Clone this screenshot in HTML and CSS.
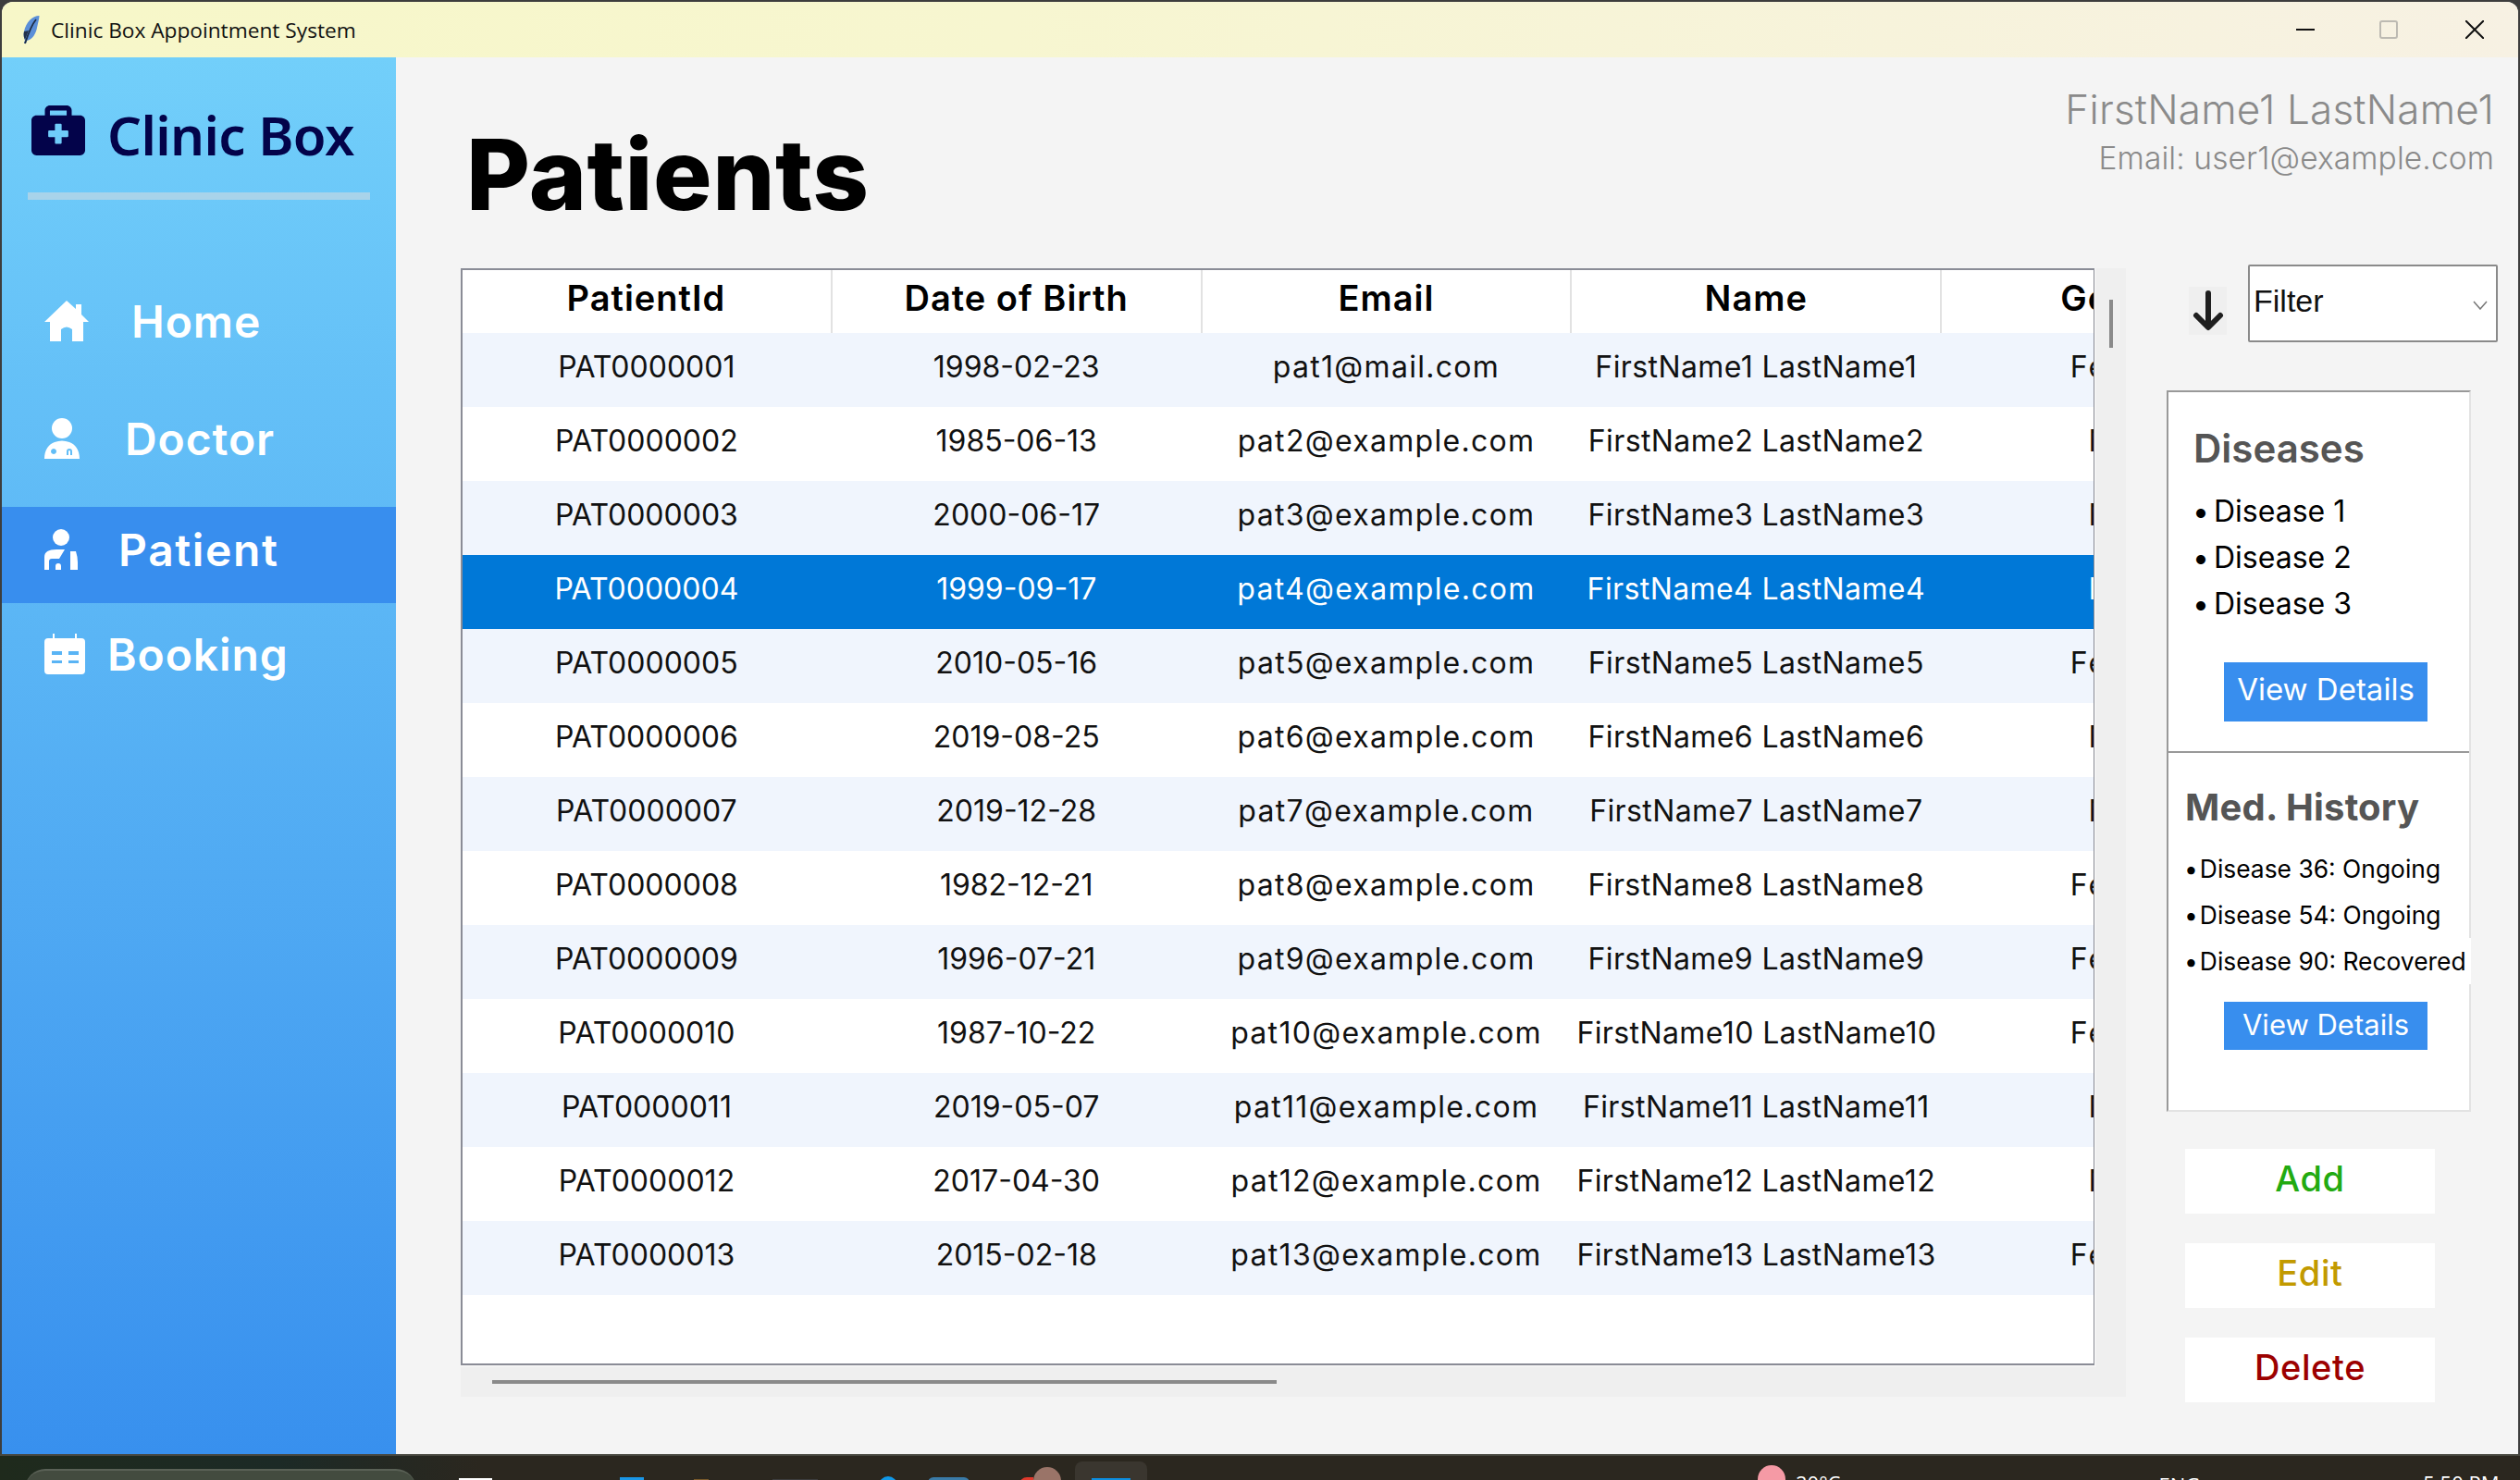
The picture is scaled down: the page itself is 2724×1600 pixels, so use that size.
FILE: index.html
```html
<!DOCTYPE html>
<html lang="en">
<head>
<meta charset="utf-8">
<title>Clinic Box Appointment System</title>
<link rel="stylesheet" href="styles.css">
</head>
<body>
<div class="window">
  <header class="titlebar">
    <svg class="feather" viewBox="0 0 18 32"><path d="M17.500 1C10 1 3 8 1 18c-1 4 0 7 1 9l-1 4h2l1-3c6-1 10-8 11-14 1-5 2.500-10 2.500-13z" fill="#5b8fd8"/><path d="M14 5C9 11 6 19 2 31" stroke="#1d2c44" stroke-width="1.800" fill="none"/><path d="M1 18c-1 4 0 7 1 9l4-10z" fill="#22324c"/></svg>
    <span class="title-text">Clinic Box Appointment System</span>
    <div class="win-controls">
      <svg class="win-min" viewBox="0 0 20 20"><path d="M0 10h20" stroke="#111" stroke-width="2"/></svg>
      <svg class="win-max" viewBox="0 0 20 20"><rect x="1" y="1" width="18" height="18" rx="2" fill="none" stroke="#bdbab2" stroke-width="2"/></svg>
      <svg class="win-close" viewBox="0 0 20 20"><path d="M0 0l20 20M20 0L0 20" stroke="#111" stroke-width="2"/></svg>
    </div>
  </header>
  <div class="app">
    <aside class="sidebar">
      <div class="brand">
        <svg class="brand-icon" viewBox="0 0 512 480" preserveAspectRatio="none"><path fill="#03034a" d="M464 96h-80V48c0-26.500-21.500-48-48-48H176c-26.500 0-48 21.500-48 48v48H48c-26.500 0-48 21.500-48 48v288c0 26.500 21.500 48 48 48h416c26.500 0 48-21.500 48-48V144c0-26.500-21.500-48-48-48zM176 48h160v48H176V48zm176 248c0 4.400-3.600 8-8 8h-56v56c0 4.400-3.600 8-8 8h-48c-4.400 0-8-3.600-8-8v-56h-56c-4.400 0-8-3.600-8-8v-48c0-4.400 3.600-8 8-8h56v-56c0-4.400 3.600-8 8-8h48c4.400 0 8 3.600 8 8v56h56c4.400 0 8 3.600 8 8v48z"/></svg>
        <span class="brand-name">Clinic Box</span>
      </div>
      <div class="brand-rule"></div>
      <nav class="nav">
        <a class="nav-item nav-home">
          <svg class="icon-home" viewBox="0 0 48 44"><path fill="#fff" d="M24 0l10 9V4h6v11l8 8h-6v21H30V31q-6-5-12 0v13H6V23H0z"/></svg>
          <span>Home</span>
        </a>
        <a class="nav-item nav-doctor">
          <svg class="icon-doctor" viewBox="0 0 38 44"><circle cx="19" cy="11" r="11" fill="#fff"/><path fill="#fff" fill-rule="evenodd" d="M11 26q8-3 16 0c6 2 11 8 11 18H0c0-10 5-16 11-18zM10 33a3 3 0 1 0 .01 0zM24 40v-4q0-3 3-3t3 3v4h-2v-4q0-1-1-1t-1 1v4z"/></svg>
          <span>Doctor</span>
        </a>
        <a class="nav-item nav-patient active">
          <svg class="icon-patient" viewBox="0 0 36 44"><circle cx="18" cy="9" r="9" fill="#fff"/><path fill="#fff" d="M13 22h9l-6 10H8a3 3 0 0 0-3 3v9H0V30q0-8 13-8zM28 24h6q2 6 2 12v8h-8zM12 40a3 3 0 0 1 6 0v4h-6z"/></svg>
          <span>Patient</span>
        </a>
        <a class="nav-item nav-booking">
          <svg class="icon-booking" viewBox="0 0 44 44"><path fill="#fff" fill-rule="evenodd" d="M9 0h2v5h22V0h2v5h5q4 0 4 4v31q0 4-4 4H4q-4 0-4-4V9q0-4 4-4h5zM8 19v4h11v-4zM26 19v4h11v-4zM8 29v3h11v-3zM26 29v3h11v-3z"/></svg>
          <span>Booking</span>
        </a>
      </nav>
    </aside>
    <main class="main">
      <div class="page-head">
        <h1 class="page-title">Patients</h1>
        <div class="user">
          <div class="user-name">FirstName1 LastName1</div>
          <div class="user-email">Email: user1@example.com</div>
        </div>
      </div>
      <div class="content">
        <section class="table-area">
          <div class="table-frame">
            <table class="grid">
              <colgroup><col class="col"><col class="col"><col class="col"><col class="col"><col class="col"></colgroup>
              <thead><tr><th>PatientId</th><th>Date of Birth</th><th>Email</th><th>Name</th><th>Gender</th></tr></thead>
              <tbody>
                <tr><td>PAT0000001</td><td>1998-02-23</td><td>pat1@mail.com</td><td>FirstName1 LastName1</td><td>Female</td></tr>
                <tr><td>PAT0000002</td><td>1985-06-13</td><td>pat2@example.com</td><td>FirstName2 LastName2</td><td>Male</td></tr>
                <tr><td>PAT0000003</td><td>2000-06-17</td><td>pat3@example.com</td><td>FirstName3 LastName3</td><td>Male</td></tr>
                <tr class="selected"><td>PAT0000004</td><td>1999-09-17</td><td>pat4@example.com</td><td>FirstName4 LastName4</td><td>Male</td></tr>
                <tr><td>PAT0000005</td><td>2010-05-16</td><td>pat5@example.com</td><td>FirstName5 LastName5</td><td>Female</td></tr>
                <tr><td>PAT0000006</td><td>2019-08-25</td><td>pat6@example.com</td><td>FirstName6 LastName6</td><td>Male</td></tr>
                <tr><td>PAT0000007</td><td>2019-12-28</td><td>pat7@example.com</td><td>FirstName7 LastName7</td><td>Male</td></tr>
                <tr><td>PAT0000008</td><td>1982-12-21</td><td>pat8@example.com</td><td>FirstName8 LastName8</td><td>Female</td></tr>
                <tr><td>PAT0000009</td><td>1996-07-21</td><td>pat9@example.com</td><td>FirstName9 LastName9</td><td>Female</td></tr>
                <tr><td>PAT0000010</td><td>1987-10-22</td><td>pat10@example.com</td><td>FirstName10 LastName10</td><td>Female</td></tr>
                <tr><td>PAT0000011</td><td>2019-05-07</td><td>pat11@example.com</td><td>FirstName11 LastName11</td><td>Male</td></tr>
                <tr><td>PAT0000012</td><td>2017-04-30</td><td>pat12@example.com</td><td>FirstName12 LastName12</td><td>Male</td></tr>
                <tr><td>PAT0000013</td><td>2015-02-18</td><td>pat13@example.com</td><td>FirstName13 LastName13</td><td>Female</td></tr>
              </tbody>
            </table>
          </div>
          <div class="vtrack"><div class="vthumb"></div></div>
          <div class="htrack"><div class="hthumb"></div></div>
        </section>
        <section class="side">
          <div class="toolbar">
            <div class="sort-btn"><svg viewBox="0 0 34 44"><path d="M17 3v36M4 27l13 13 13-13" fill="none" stroke="#1f1f1f" stroke-width="6" stroke-linecap="round" stroke-linejoin="round"/></svg></div>
            <div class="filter"><span>Filter</span><svg viewBox="0 0 16 10"><path d="M1 1l7 8 7-8" fill="none" stroke="#777" stroke-width="1.500"/></svg></div>
          </div>
          <div class="panel">
            <div class="panel-top">
              <h2 class="panel-heading">Diseases</h2>
              <ul class="items">
                <li>Disease 1</li><li>Disease 2</li><li>Disease 3</li>
              </ul>
              <button class="view-btn view-top">View Details</button>
            </div>
            <div class="panel-bottom">
              <h2 class="history-heading">Med. History</h2>
              <ul class="history">
                <li>Disease 36: Ongoing</li><li>Disease 54: Ongoing</li><li class="over">Disease 90: Recovered</li>
              </ul>
              <button class="view-btn view-bottom">View Details</button>
            </div>
          </div>
          <div class="actions">
            <button class="action add">Add</button>
            <button class="action edit">Edit</button>
            <button class="action del">Delete</button>
          </div>
        </section>
      </div>
    </main>
  </div>
</div>
<footer class="taskbar">
  <div class="search"></div>
  <i class="tb tb-white"></i><i class="tb tb-blue"></i><i class="tb tb-brown"></i><i class="tb tb-dark"></i><i class="tb tb-sky"></i><i class="tb tb-steel"></i><i class="tb tb-red"></i><i class="tb tb-oval"></i>
  <div class="tb-active"><i class="tb-active-in"></i></div>
  <i class="weather-dot"></i><span class="tb-text weather">20°C</span>
  <span class="tb-text lang">ENG</span>
  <span class="tb-text clock">5:50 PM</span>
</footer>
</body>
</html>
```
FILE: styles.css
```css
* { box-sizing: border-box; }
html, body { margin: 0; padding: 0; }
body { width: 2724px; height: 1600px; overflow: hidden; background: #3d3d3d; font-family: Inter, "Liberation Sans", sans-serif; color: #000; display: flex; flex-direction: column; }
.window { width: 2720px; height: 1570px; margin: 2px 2px 0; border-radius: 12px 12px 0 0; overflow: hidden; display: flex; flex-direction: column; background: #f4f4f4; }

.titlebar { flex: 0 0 60px; display: flex; align-items: center; background: linear-gradient(90deg, #f7f7c8 0%, #f7f6d0 40%, #f7f1e3 100%); padding-left: 23px; }
.feather { width: 18px; height: 32px; margin-right: 12px; }
.title-text { font-family: "Open Sans", sans-serif; font-size: 22.7px; color: #111; }
.win-controls { margin-left: auto; display: flex; align-items: center; padding-right: 37px; }
.win-min, .win-max, .win-close { width: 20px; height: 20px; display: block; }
.win-max { margin-left: 70px; }
.win-close { margin-left: 73px; }

.app { flex: 1; display: flex; min-height: 0; }
.sidebar { flex: 0 0 426px; background: linear-gradient(180deg, #72cffa 0%, #3890ee 100%); display: flex; flex-direction: column; }
.brand { display: flex; align-items: center; height: 146px; padding: 52px 0 40px 32px; }
.brand-icon { width: 58px; height: 54px; }
.brand-name { margin-left: 24px; padding-top: 9px; font-family: "Noto Sans", sans-serif; font-weight: 600; font-size: 58px; line-height: 54px; color: #03034a; letter-spacing: -0.6px; }
.brand-rule { height: 8px; margin-left: 28px; width: 370px; background: #a8d3ea; }
.nav { margin-top: 68px; display: flex; flex-direction: column; }
.nav-item { display: flex; align-items: center; padding-left: 46px; color: #fff; font-size: 48px; font-weight: 600; letter-spacing: 0.9px; }
.nav-home { height: 126px; }
.nav-doctor { height: 138px; padding-bottom: 10px; }
.nav-patient { height: 104px; padding-bottom: 12px; letter-spacing: 1.6px; }
.nav-booking { height: 108px; padding-top: 2px; }
.active { background: #388eee; }
.icon-home { width: 48px; height: 44px; margin-right: 46px; }
.icon-doctor { width: 38px; height: 44px; margin-right: 49px; }
.icon-patient { width: 36px; height: 44px; margin-right: 44px; }
.icon-booking { width: 44px; height: 44px; margin-right: 24px; }

.main { flex: 1; min-width: 0; display: flex; flex-direction: column; }
.page-head { height: 224px; display: flex; justify-content: space-between; padding: 0 26px 0 76px; }
.page-title { margin: 62px 0 0; font-size: 106px; line-height: 130px; font-weight: 800; letter-spacing: 0.5px; color: #000; }
.user { text-align: right; padding-top: 27px; color: #8a8a8a; }
.user-name { font-size: 44px; line-height: 58px; font-weight: 300; letter-spacing: 0.2px; }
.user-email { font-size: 33.5px; line-height: 44px; margin-top: 2px; font-weight: 300; letter-spacing: 0.1px; }
.content { flex: 1; display: flex; min-height: 0; }

.table-area { margin: 4px 0 0 70px; width: 1800px; height: 1220px; display: grid; grid-template-columns: 1768px 32px; grid-template-rows: 1188px 32px; }
.table-frame { width: 1766px; border: 2px solid #8a8c96; border-right-width: 1px; background: #fff; overflow: hidden; height: 1186px; }
.grid { border-collapse: collapse; table-layout: fixed; width: 2000px; margin-left: -1px; }
.grid th { height: 68px; font-size: 38px; font-weight: 600; padding: 0 0 8px; background: #fff; border-right: 2px solid #e2e2e2; letter-spacing: 1px; }
.grid td { height: 80px; padding: 0 6px 8px; font-size: 32px; text-align: center; white-space: nowrap; overflow: hidden; color: #111; font-weight: 400; }
.grid td:nth-child(3) { letter-spacing: 1.3px; }
.grid td:nth-child(4) { letter-spacing: 0.4px; }
.grid td:nth-child(5) { letter-spacing: 2px; }
.grid tbody tr:nth-child(odd) { background: #f0f5fd; }
.grid tbody tr.selected { background: #0078d7; }
.grid tbody tr.selected td { color: #fff; }
.vtrack { background: #efefef; padding: 34px 0 0 14px; grid-row: 1 / span 2; grid-column: 2; }
.vthumb { width: 4px; height: 52px; background: #8a8a8a; }
.htrack { background: #efefef; padding: 14px 0 0 34px; grid-column: 1; grid-row: 2; }
.hthumb { width: 848px; height: 4px; background: #8a8a8a; }

.side { flex: 1; min-width: 0; }
.toolbar { display: flex; padding-left: 68px; height: 84px; align-items: flex-start; }
.sort-btn { width: 41px; height: 52px; margin-top: 24px; background: #efefef; display: flex; align-items: center; justify-content: center; }
.sort-btn svg { width: 34px; height: 44px; }
.filter { width: 270px; height: 84px; margin-left: 23px; background: #fff; border: 2px solid #8a8a8a; border-radius: 2px; display: flex; align-items: center; justify-content: space-between; padding: 0 9px 6px 4px; font-family: "Liberation Sans", sans-serif; font-size: 34px; color: #111; }
.filter svg { width: 16px; height: 10px; margin-top: 10px; }
.panel { margin: 52px 0 0 44px; width: 329px; height: 780px; background: #fff; border: 2px solid #e3e3e3; border-top-color: #999; border-left-color: #999; }
.panel-top { height: 390px; border-bottom: 2px solid #999; padding-top: 33px; }
.panel-heading { margin: 0 0 0 27px; font-size: 42px; line-height: 56px; font-weight: 600; color: #555; }
.items { list-style: none; margin: 15px 0 0 26px; padding: 0; font-size: 32px; line-height: 50px; }
.items li::before { content: "•"; margin-right: 5px; }
.history li::before { content: "•"; margin-right: 2px; }
.view-btn { display: block; border: 0; background: #388eee; color: #fff; font-family: inherit; padding: 0; width: 220px; }
.view-top { height: 64px; margin: 38px 0 0 60px; font-size: 33px; padding-bottom: 6px; }
.panel-bottom { padding-top: 36px; }
.history-heading { margin: 0 0 0 18px; font-size: 40px; line-height: 46px; font-weight: 700; color: #555; letter-spacing: 0.2px; }
.history { list-style: none; margin: 18px 0 0 17px; padding: 0; font-size: 26.4px; line-height: 50px; white-space: nowrap; }
.history .over { background: #fff; margin-right: -2px; }
.view-bottom { height: 52px; margin: 19px 0 0 60px; font-size: 31px; padding-bottom: 4px; }
.actions { margin: 40px 0 0 64px; width: 270px; display: flex; flex-direction: column; gap: 32px; }
.action { height: 70px; border: 0; background: #fff; font-family: inherit; font-size: 38px; font-weight: 500; padding: 0 0 6px; letter-spacing: 0.6px; }
.add { color: #22aa11; }
.edit { color: #c29a00; }
.del { color: #9c0000; }

.taskbar { flex: 1; display: flex; align-items: flex-start; overflow: hidden; background: linear-gradient(90deg, #1f2a1c 0, #1c2a26 300px, #2b271f 520px, #2b271f 100%); border-top: 2px solid #46463e; }
.search { width: 423px; height: 40px; margin: 14px 0 0 27px; background: #434b3f; border-top: 2px solid #5a6156; border-radius: 22px 22px 0 0; flex: none; }
.tb { display: block; flex: none; height: 14px; }
.tb-white { width: 36px; margin: 24px 0 0 46px; background: #fff; }
.tb-blue { width: 26px; margin: 23px 0 0 138px; background: #1a96e6; }
.tb-brown { width: 16px; margin: 25px 0 0 54px; background: #7a5a2a; }
.tb-dark { width: 49px; margin: 25px 0 0 69px; background: #3d3d3d; }
.tb-sky { width: 20px; margin: 22px 0 0 66px; background: #1098e8; border-radius: 10px 10px 0 0; }
.tb-steel { width: 45px; margin: 23px 0 0 33px; background: #3a7ba8; border-radius: 6px 6px 0 0; }
.tb-red { width: 15px; margin: 23px 0 0 54px; background: #e0392b; border-radius: 8px 0 0 0; }
.tb-oval { width: 30px; height: 30px; margin: 12px 0 0 0; background: #9a7468; border-radius: 15px 15px 0 0; }
.tb-active { flex: none; width: 78px; height: 40px; margin: 6px 0 0 15px; background: #3a362f; border-radius: 8px 8px 0 0; padding: 18px 0 0 18px; }
.tb-active-in { display: block; width: 42px; height: 10px; background: #0c8ee0; }
.weather-dot { flex: none; width: 30px; height: 40px; margin: 10px 0 0 660px; background: #f59aa5; border-radius: 15px 15px 0 0; }
.tb-text { flex: none; font-family: "Open Sans", sans-serif; font-size: 22px; line-height: 28px; color: #fff; }
.weather { margin: 15px 0 0 11px; }
.lang { margin: 17px 0 0 344px; }
.clock { margin: 15px 0 0 241px; }
```
